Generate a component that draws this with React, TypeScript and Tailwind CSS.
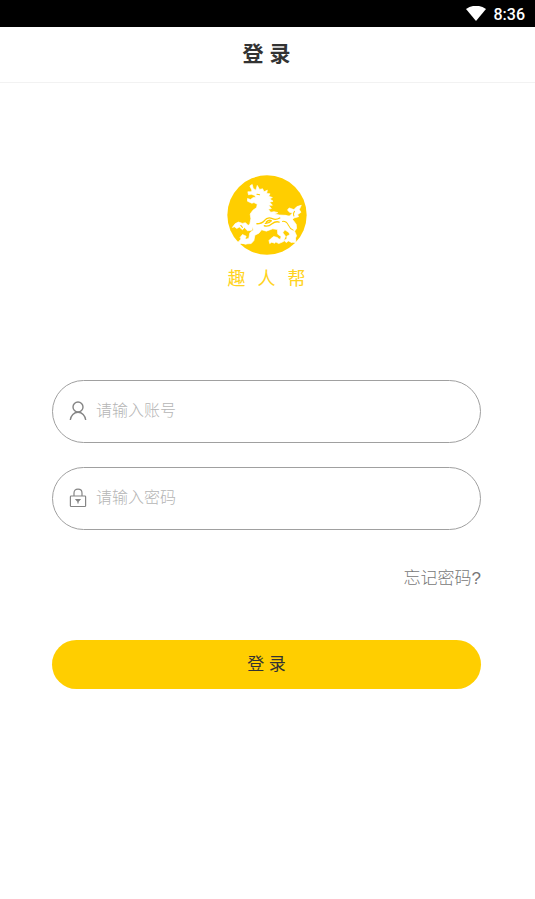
import React, { useState } from 'react';

const fontStack = 'font-["Liberation_Sans","Noto_Sans_CJK_SC",sans-serif]';

function StatusBar() {
  return (
    <div className="h-[27px] bg-black flex items-center justify-end gap-2 pr-2.5">
      <svg className="w-5 h-4" viewBox="0 0 20 16" fill="#fff" aria-hidden="true">
        <path d="M0 3 Q10 -3.6 20 3 L10 15 Z" />
      </svg>
      <span className="pt-0.5 font-[Roboto,sans-serif] text-base font-medium leading-5 text-white">8:36</span>
    </div>
  );
}

function Logo() {
  return (
    <svg className="w-20 h-20" viewBox="33 21 238 238" role="img" aria-label="趣人帮">
      <circle cx="152" cy="140" r="118" fill="#ffce00" />
      <g fill="#fff" stroke="#fff" strokeWidth="2" strokeLinejoin="round">
        {/* Head, mane and body */}
        <path d="M101 54 L108 49 L111 61 L119 66 L123 52 L130 64 L139 62 L143 71 L153 66 L151 76 L161 77 L157 84 L168 88 L160 92 L170 99 L160 102 L168 111 L157 111 L165 121 L156 123 L163 132 L173 130 L184 133 L174 137 L189 140 L207 141 L221 147 L231 157 L239 168 L240 180 L234 188 L240 202 L235 212 L238 222 L226 221 L219 215 L224 206 L217 192 L205 184 L199 193 L207 203 L201 219 L187 225 L176 219 L182 211 L192 212 L194 204 L184 197 L183 183 L169 181 L150 188 L136 184 L128 194 L116 200 L113 216 L105 225 L88 226 L74 224 L70 216 L78 209 L88 213 L98 209 L101 193 L111 185 L110 174 L101 181 L94 174 L101 166 L104 151 L102 137 L110 126 L121 118 L123 108 L113 103 L107 105 L94 99 L94 91 L103 94 L111 88 L118 88 L116 82 L105 78 L97 80 L95 71 L105 71 L107 66 Z" />
        {/* Tail */}
        <path d="M205 142 L219 143 L228 134 L219 132 L213 125 L218 119 L232 124 L241 115 L254 111 L248 124 L253 132 L243 139 L246 145 L232 149 L225 156 L213 151 Z" />
        {/* Paws */}
        <path d="M49 177 L57 166 L67 161 L79 165 L88 163 L97 172 L110 172 L107 185 L94 187 L85 177 L79 184 L70 176 L62 180 L55 175 Z" />
        <path d="M72 207 L79 198 L90 203 L87 211 L99 216 L90 227 L76 223 L67 229 L65 220 L78 216 Z" />
        <path d="M211 203 L221 198 L235 206 L238 216 L230 213 L225 222 L216 217 L209 222 L203 216 L211 211 Z" />
        <path d="M163 211 L172 204 L183 207 L190 216 L180 216 L175 224 L166 221 L160 225 L158 216 Z" />
      </g>
      <g fill="none" stroke="#ffce00" strokeWidth="4" strokeLinecap="round" strokeLinejoin="round">
        <path d="M122 78 L130 80" strokeWidth="3" />
        <path d="M122 166 Q136 166 144 157 Q154 144 168 151 Q178 156 190 149" />
        <path d="M144 172 Q155 176 167 166 Q177 158 188 161 M150 161 Q158 153 165 157 Q157 166 147 165" />
        <path d="M198 159 Q210 158 216 171 Q220 181 230 185" strokeWidth="3" />
        <path d="M234 129 Q229 135 232 143 M74 171 L79 177" strokeWidth="3" />
      </g>
    </svg>
  );
}

function UserIcon() {
  return (
    <svg className="w-5 h-5 shrink-0" viewBox="0 0 20 20" fill="none" stroke="#858585" strokeWidth="1.4" aria-hidden="true">
      <circle cx="10" cy="6" r="5" />
      <path d="M2.3 19 C2.8 14.5 6 11.2 10 11.2 C14 11.2 17.2 14.5 17.7 19" />
    </svg>
  );
}

function LockIcon() {
  return (
    <svg className="w-5 h-5 shrink-0" viewBox="0 0 20 20" fill="none" stroke="#858585" strokeWidth="1.2" aria-hidden="true">
      <rect x="2.4" y="8" width="15.2" height="10.5" rx="0.8" />
      <path d="M6 8 V5 Q6 1.2 10 1.2 Q14 1.2 14 5 V8" />
      <path d="M8.2 11.5 H11.8 L10 13.5 Z M10 13 V15.5" fill="#858585" />
    </svg>
  );
}

interface FieldProps {
  label: string;
  type: string;
  value: string;
  onChange: (value: string) => void;
  icon: React.ReactNode;
}

function Field({ label, type, value, onChange, icon }: FieldProps) {
  return (
    <label className="h-[63px] flex items-center gap-2 px-[15px] pb-0.5 border border-[#a0a0a0] rounded-full">
      {icon}
      <input
        type={type}
        aria-label={label}
        placeholder={label}
        value={value}
        onChange={(e) => onChange(e.target.value)}
        className="flex-1 min-w-0 bg-transparent outline-none text-base font-light text-[#333] placeholder:text-[#b5b5b5]"
      />
    </label>
  );
}

export default function App() {
  const [account, setAccount] = useState('');
  const [password, setPassword] = useState('');

  return (
    <div className={`min-h-screen bg-white ${fontStack}`}>
      <StatusBar />
      <header className="h-14 flex items-center justify-center pb-0.5 pr-0.5 border-b border-[#f2f2f2]">
        <h1 className="text-[21px] leading-7 font-bold text-[#333]">登 录</h1>
      </header>

      <main className="pl-[52px] pr-[54px]">
        <div className="pt-[92px] flex flex-col items-center">
          <Logo />
          <p className='mt-2 font-["Noto_Sans_CJK_SC",sans-serif] text-lg leading-7 whitespace-pre text-[#ffd321]'>趣   人   帮</p>
        </div>

        <form className="mt-[89px] flex flex-col" onSubmit={(e) => e.preventDefault()}>
          <div className="flex flex-col gap-6">
            <Field label="请输入账号" type="text" value={account} onChange={setAccount} icon={<UserIcon />} />
            <Field label="请输入密码" type="password" value={password} onChange={setPassword} icon={<LockIcon />} />
          </div>
          <a href="#" className="mt-[37px] self-end text-[17px] leading-6 font-light text-[#777]">
            忘记密码?
          </a>
          <button type="submit" className="mt-[49px] h-[49px] rounded-full bg-[#ffce00] text-[17px] text-[#333]">
            登 录
          </button>
        </form>
      </main>
    </div>
  );
}
